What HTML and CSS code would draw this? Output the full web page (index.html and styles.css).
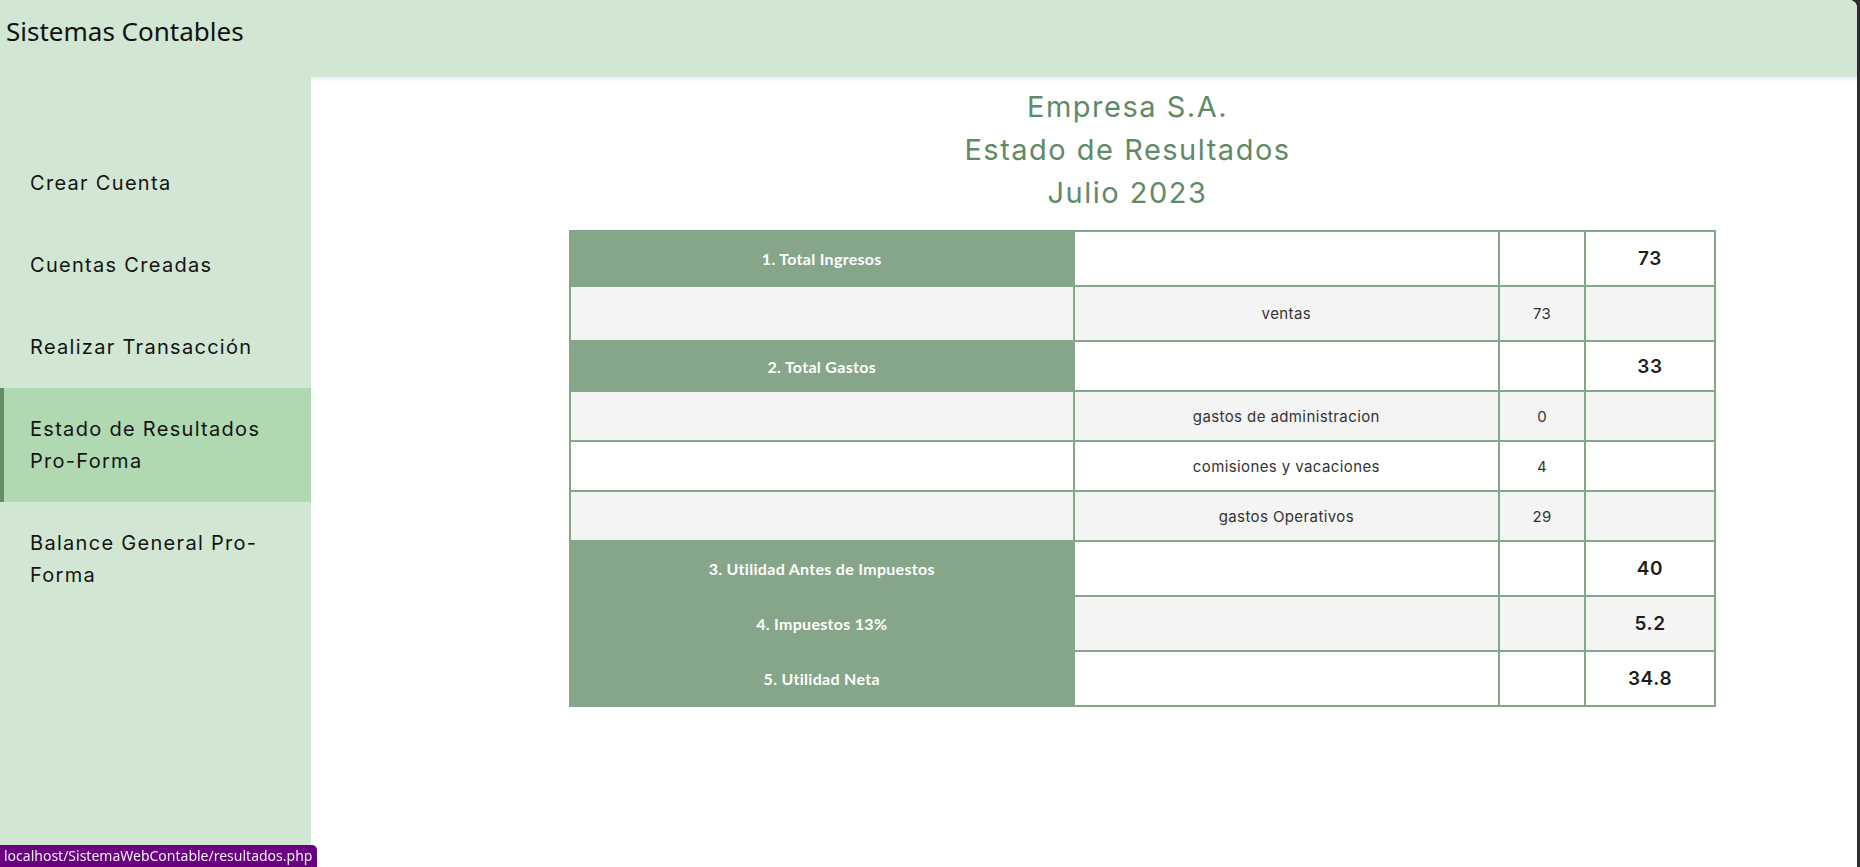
FILE: index.html
```html
<!DOCTYPE html>
<html lang="es">
<head>
    <meta charset="UTF-8">
    <meta name="viewport" content="width=device-width, initial-scale=1.0">
    <title>Sistemas Contables - Estado de Resultados</title>
    <link rel="stylesheet" href="styles.css">
</head>
<body>
    <div class="app">
        <header class="topbar">
            <h1>Sistemas Contables</h1>
        </header>

        <nav class="sidebar">
            <a class="nav-item" href="#">Crear Cuenta</a>
            <a class="nav-item" href="#">Cuentas Creadas</a>
            <a class="nav-item" href="#">Realizar Transacción</a>
            <a class="nav-item active" href="#">Estado de Resultados Pro-Forma</a>
            <a class="nav-item" href="#">Balance General Pro-Forma</a>
        </nav>

        <main class="main">
            <div class="report">
                <div class="report-title">
                    <p>Empresa S.A.</p>
                    <p>Estado de Resultados</p>
                    <p>Julio 2023</p>
                </div>

                <table class="results">
                    <colgroup>
                        <col class="c-label">
                        <col class="c-account">
                        <col class="c-amount">
                        <col class="c-total">
                    </colgroup>
                    <tr class="big">
                        <th>1. Total Ingresos</th>
                        <td></td>
                        <td></td>
                        <td class="total">73</td>
                    </tr>
                    <tr class="big">
                        <td></td>
                        <td>ventas</td>
                        <td>73</td>
                        <td></td>
                    </tr>
                    <tr>
                        <th>2. Total Gastos</th>
                        <td></td>
                        <td></td>
                        <td class="total">33</td>
                    </tr>
                    <tr>
                        <td></td>
                        <td>gastos de administracion</td>
                        <td>0</td>
                        <td></td>
                    </tr>
                    <tr>
                        <td></td>
                        <td>comisiones y vacaciones</td>
                        <td>4</td>
                        <td></td>
                    </tr>
                    <tr>
                        <td></td>
                        <td>gastos Operativos</td>
                        <td>29</td>
                        <td></td>
                    </tr>
                    <tr class="big">
                        <th>3. Utilidad Antes de Impuestos</th>
                        <td></td>
                        <td></td>
                        <td class="total">40</td>
                    </tr>
                    <tr class="big">
                        <th>4. Impuestos 13%</th>
                        <td></td>
                        <td></td>
                        <td class="total">5.2</td>
                    </tr>
                    <tr class="big">
                        <th>5. Utilidad Neta</th>
                        <td></td>
                        <td></td>
                        <td class="total">34.8</td>
                    </tr>
                </table>
            </div>
        </main>
    </div>

    <div class="status-url">localhost/SistemaWebContable/resultados.php</div>
</body>
</html>
```

FILE: styles.css
```css
html, body {
    height: 100%;
}
body {
    margin: 0;
    background: #2d2d2d;
    font-family: Inter, 'Noto Sans', sans-serif;
    overflow: hidden;
}
.app {
    display: grid;
    grid-template-columns: 311px 1fr;
    grid-template-rows: 77px 1fr;
    height: 867px;
    margin-right: 3px;
    background: #fff;
    border-top-right-radius: 8px;
    overflow: hidden;
}
.topbar {
    grid-column: 1 / 3;
    background: #d1e7d3;
}
.topbar h1 {
    margin: 0;
    padding: 13px 6px;
    font-family: 'Noto Sans', sans-serif;
    font-weight: 400;
    font-size: 26px;
    line-height: 36px;
    color: #111;
}
.sidebar {
    background: #d1e7d3;
    padding-top: 65px;
    display: flex;
    flex-direction: column;
}
.nav-item {
    display: block;
    padding: 25px 30px;
    font-size: 20px;
    letter-spacing: 1.3px;
    line-height: 32px;
    color: #141414;
    text-decoration: none;
}
.nav-item.active {
    background: #b0d8b1;
    border-left: 4px solid #678a6a;
    padding-left: 26px;
}
.main {
    box-shadow: inset 0 7px 7px -7px rgba(90, 110, 190, 0.25);
    padding-top: 8px;
}
.report {
    width: 1147px;
    margin-left: 258px;
}
.report-title {
    text-align: center;
    padding-right: 30px;
    color: #5f8a66;
    font-size: 29px;
    letter-spacing: 1.5px;
    line-height: 43px;
    margin-bottom: 16px;
}
.report-title p {
    margin: 0;
}
.results {
    width: 100%;
    border-collapse: collapse;
    color: #333;
}
.c-label { width: 504px; }
.c-account { width: 426px; }
.c-amount { width: 86px; }
.c-total { width: 130px; }
.results th,
.results td {
    border: 2px solid #86a689;
    text-align: center;
    height: 48px;
    padding: 0;
    font-size: 15px;
    letter-spacing: 0.4px;
}
.results tr:nth-child(even) td {
    background: #f4f4f4;
}
.results tr.big th,
.results tr.big td {
    height: 53px;
}
.results th {
    background: #86a689;
    color: #fff;
    font-family: Lato, sans-serif;
    font-weight: 700;
    font-size: 16px;
    letter-spacing: 0.3px;
}
.results td.total {
    font-size: 19px;
    font-weight: 600;
    letter-spacing: 0.6px;
    color: #1e1e1e;
}
.status-url {
    position: fixed;
    left: 0;
    bottom: 0;
    padding: 0 5px 0 4px;
    height: 22px;
    line-height: 22px;
    background: #680080;
    color: #f4eef6;
    font-family: 'Noto Sans', sans-serif;
    font-size: 14px;
    border-top-right-radius: 5px;
}
```
